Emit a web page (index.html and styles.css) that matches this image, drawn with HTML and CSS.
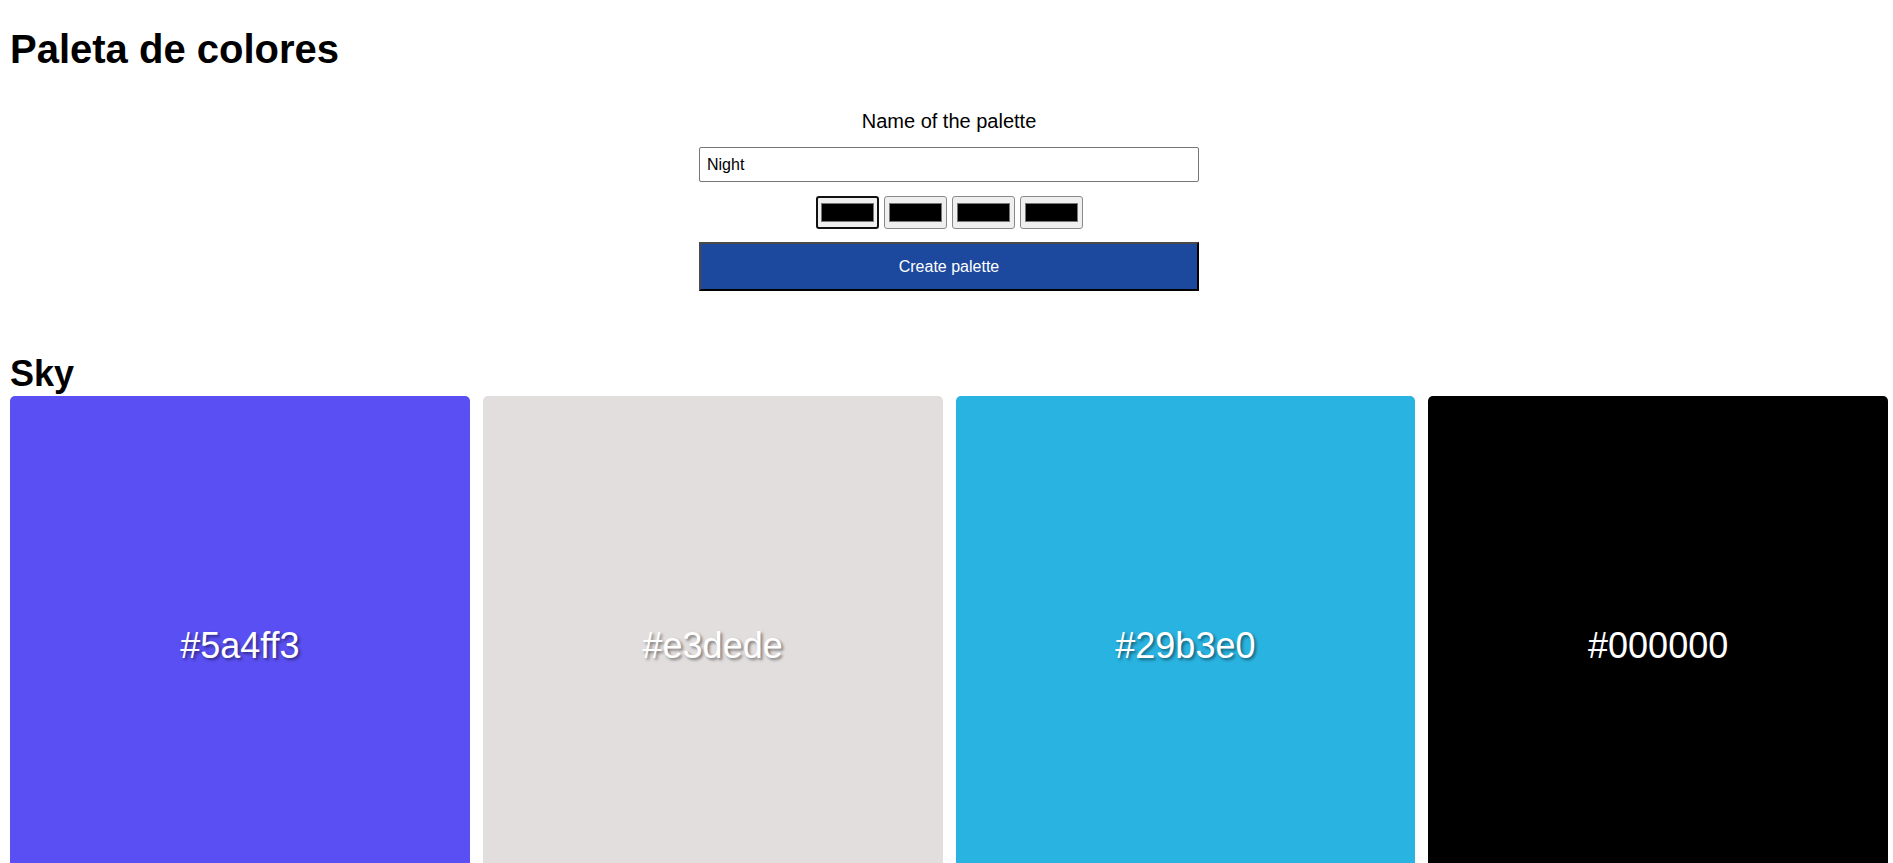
FILE: index.html
```html
<!DOCTYPE html>
<html lang="es">
<head>
<meta charset="utf-8">
<title>Paleta de colores</title>
<link rel="stylesheet" href="styles.css">
</head>
<body>
  <h1 class="title">Paleta de colores</h1>
  <form class="palette-form">
    <label class="form-label" for="name">Name of the palette</label>
    <input class="name-input" id="name" type="text" value="Night">
    <div class="pickers">
      <input class="picker picker-active" type="color" value="#000000">
      <input class="picker" type="color" value="#000000">
      <input class="picker" type="color" value="#000000">
      <input class="picker" type="color" value="#000000">
    </div>
    <button class="create-btn" type="button">Create palette</button>
  </form>
  <section class="palette">
    <h2 class="palette-name">Sky</h2>
    <div class="swatches">
      <div class="swatch" style="background:#5a4ff3">#5a4ff3</div>
      <div class="swatch" style="background:#e3dede">#e3dede</div>
      <div class="swatch" style="background:#29b3e0">#29b3e0</div>
      <div class="swatch" style="background:#000000">#000000</div>
    </div>
  </section>
</body>
</html>
```
FILE: styles.css
```css
html {
  overflow: hidden;
}
body {
  margin: 0;
  padding: 0 5px 0 10px;
  font-family: "Liberation Sans", Arial, sans-serif;
  color: #000;
  background: #fff;
}
.title {
  margin: 26px 0 0;
  font-size: 40px;
  line-height: 46px;
  font-weight: bold;
}
.palette-form {
  width: 500px;
  margin: 38px auto 0;
  display: flex;
  flex-direction: column;
  align-items: stretch;
}
.form-label {
  font-size: 20px;
  line-height: 23px;
  text-align: center;
}
.name-input {
  margin-top: 14px;
  height: 35px;
  box-sizing: border-box;
  padding: 0 7px;
  border: 1px solid #767676;
  border-radius: 2px;
  font-family: "Liberation Sans", Arial, sans-serif;
  font-size: 16px;
  color: #000;
}
.pickers {
  margin-top: 14px;
  display: flex;
  justify-content: center;
  gap: 5px;
}
.picker {
  width: 63px;
  height: 33px;
  box-sizing: border-box;
  padding: 1px 2px;
  border: 1px solid #8a8a8a;
  border-radius: 3px;
  background: #efefef;
  margin: 0;
  cursor: pointer;
}
.picker::-webkit-color-swatch-wrapper {
  padding: 5px 2px;
}
.picker::-webkit-color-swatch {
  border: 1px solid #777;
  border-radius: 0;
}
.picker-active {
  border: 2px solid #111;
  padding: 0 1px;
}
.create-btn {
  margin-top: 13px;
  height: 49px;
  box-sizing: border-box;
  background: #1c489d;
  color: #fff;
  font-family: "Liberation Sans", Arial, sans-serif;
  font-size: 16px;
  border-style: solid;
  border-width: 2px;
  border-color: #4a4a4a #000 #000 #4a4a4a;
  cursor: pointer;
}
.palette-name {
  margin: 62px 0 2px;
  font-size: 36px;
  line-height: 41px;
  font-weight: bold;
}
.swatches {
  display: grid;
  grid-template-columns: repeat(4, 1fr);
  gap: 13px;
}
.swatch {
  height: 500px;
  border-radius: 5px;
  display: flex;
  align-items: center;
  justify-content: center;
  color: #fff;
  font-size: 36px;
  text-shadow: 2px 2px 3px rgba(0, 0, 0, 0.45);
}
```
